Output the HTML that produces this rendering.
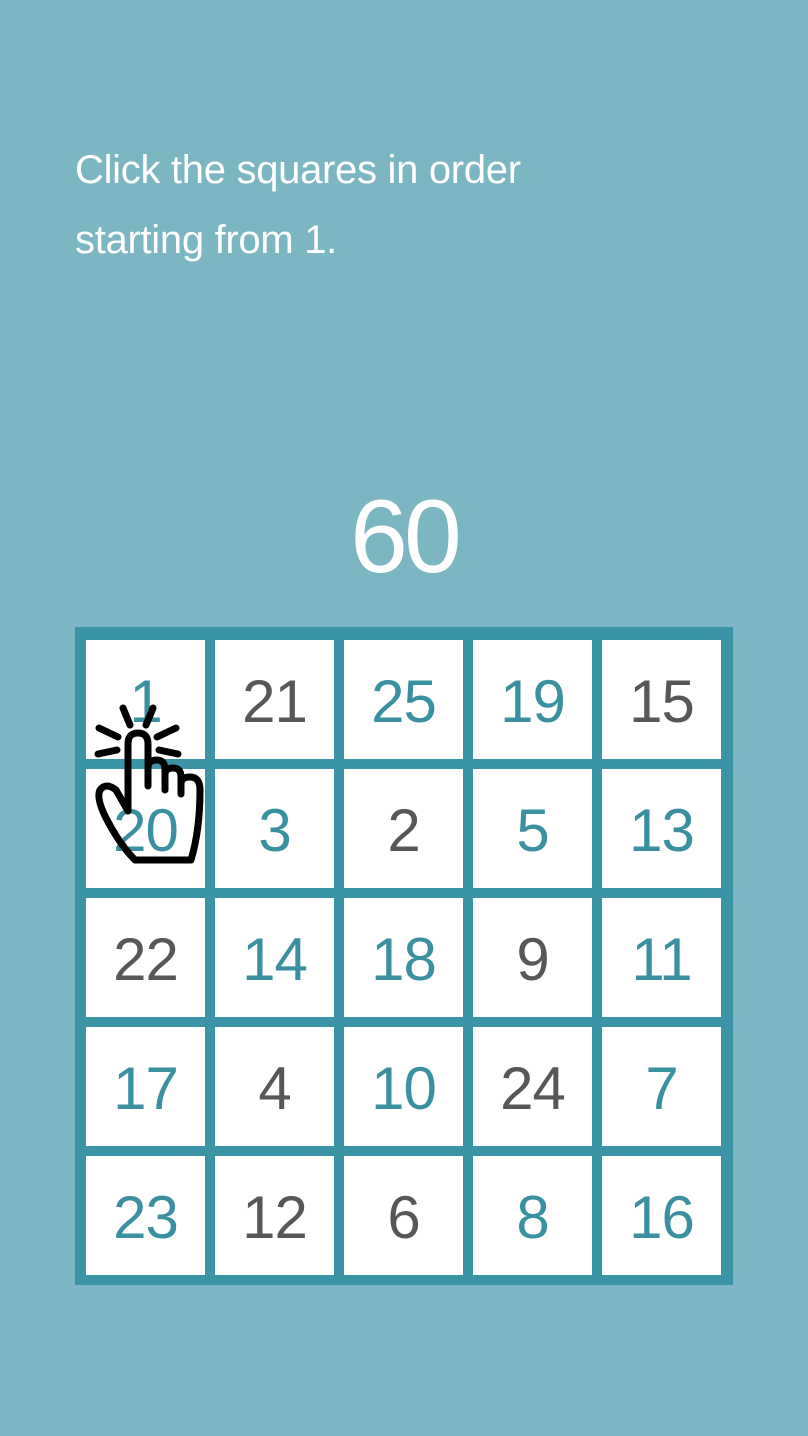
<!DOCTYPE html>
<html><head><meta charset="utf-8"><style>
body{margin:0;width:808px;height:1436px;background:#7bb6c2;position:relative;overflow:hidden;font-family:"Liberation Sans",sans-serif}
.t{position:absolute;left:75px;color:#fff;font-size:40px;letter-spacing:-0.3px;white-space:nowrap}
.big{position:absolute;left:0;width:808px;top:482px;text-align:center;color:#fff;font-size:104px;letter-spacing:-4px;line-height:110px}
.grid{position:absolute;left:75px;top:627px;width:658px;height:658px;background:#3a94a6}
.c{position:absolute;width:119px;height:119px;background:#fff;text-align:center;line-height:123px;font-size:60px;letter-spacing:-1px}
.a{color:#3a90a0}.g{color:#575757}
</style></head><body>
<div class="t" style="top:148px">Click the squares in order</div>
<div class="t" style="top:218px">starting from 1.</div>
<div class="big">60</div>
<div class="grid" id="g"></div>
<script>
var n=[[1,'a'],[21,'g'],[25,'a'],[19,'a'],[15,'g'],[20,'a'],[3,'a'],[2,'g'],[5,'a'],[13,'a'],[22,'g'],[14,'a'],[18,'a'],[9,'g'],[11,'a'],[17,'a'],[4,'g'],[10,'a'],[24,'g'],[7,'a'],[23,'a'],[12,'g'],[6,'g'],[8,'a'],[16,'a']];
var h='';for(var i=0;i<25;i++){var r=Math.floor(i/5),c=i%5;h+='<div class="c '+n[i][1]+'" style="left:'+(11+c*129)+'px;top:'+(13+r*129)+'px">'+n[i][0]+'</div>';}
document.getElementById('g').innerHTML=h;
</script>
<svg style="position:absolute;left:0;top:0" width="808" height="1436">
<g fill="none" stroke="#000" stroke-width="7" stroke-linecap="round" stroke-linejoin="round">
<path d="M123 708 L130 725 M153 708 L146 725 M99 728 L118 737 M176 728 L157 737 M98 754 L117 750 M178 754 L159 750"/>
<path d="M128 811 L128 744 Q128 733 138 733 Q148 733 148 744 L148 786 M148 768 Q148 760 157 760 Q165 760 165 770 L165 790 M165 775 Q165 768 173 768 Q181 768 181 777 L181 794 M181 784 Q181 777 190 777 Q200 777 200 790 Q200 830 191 860 L135 860 Q120 845 106 818 Q96 798 100 790 Q106 782 116 790 L128 811"/>
</g></svg>
</body></html>
